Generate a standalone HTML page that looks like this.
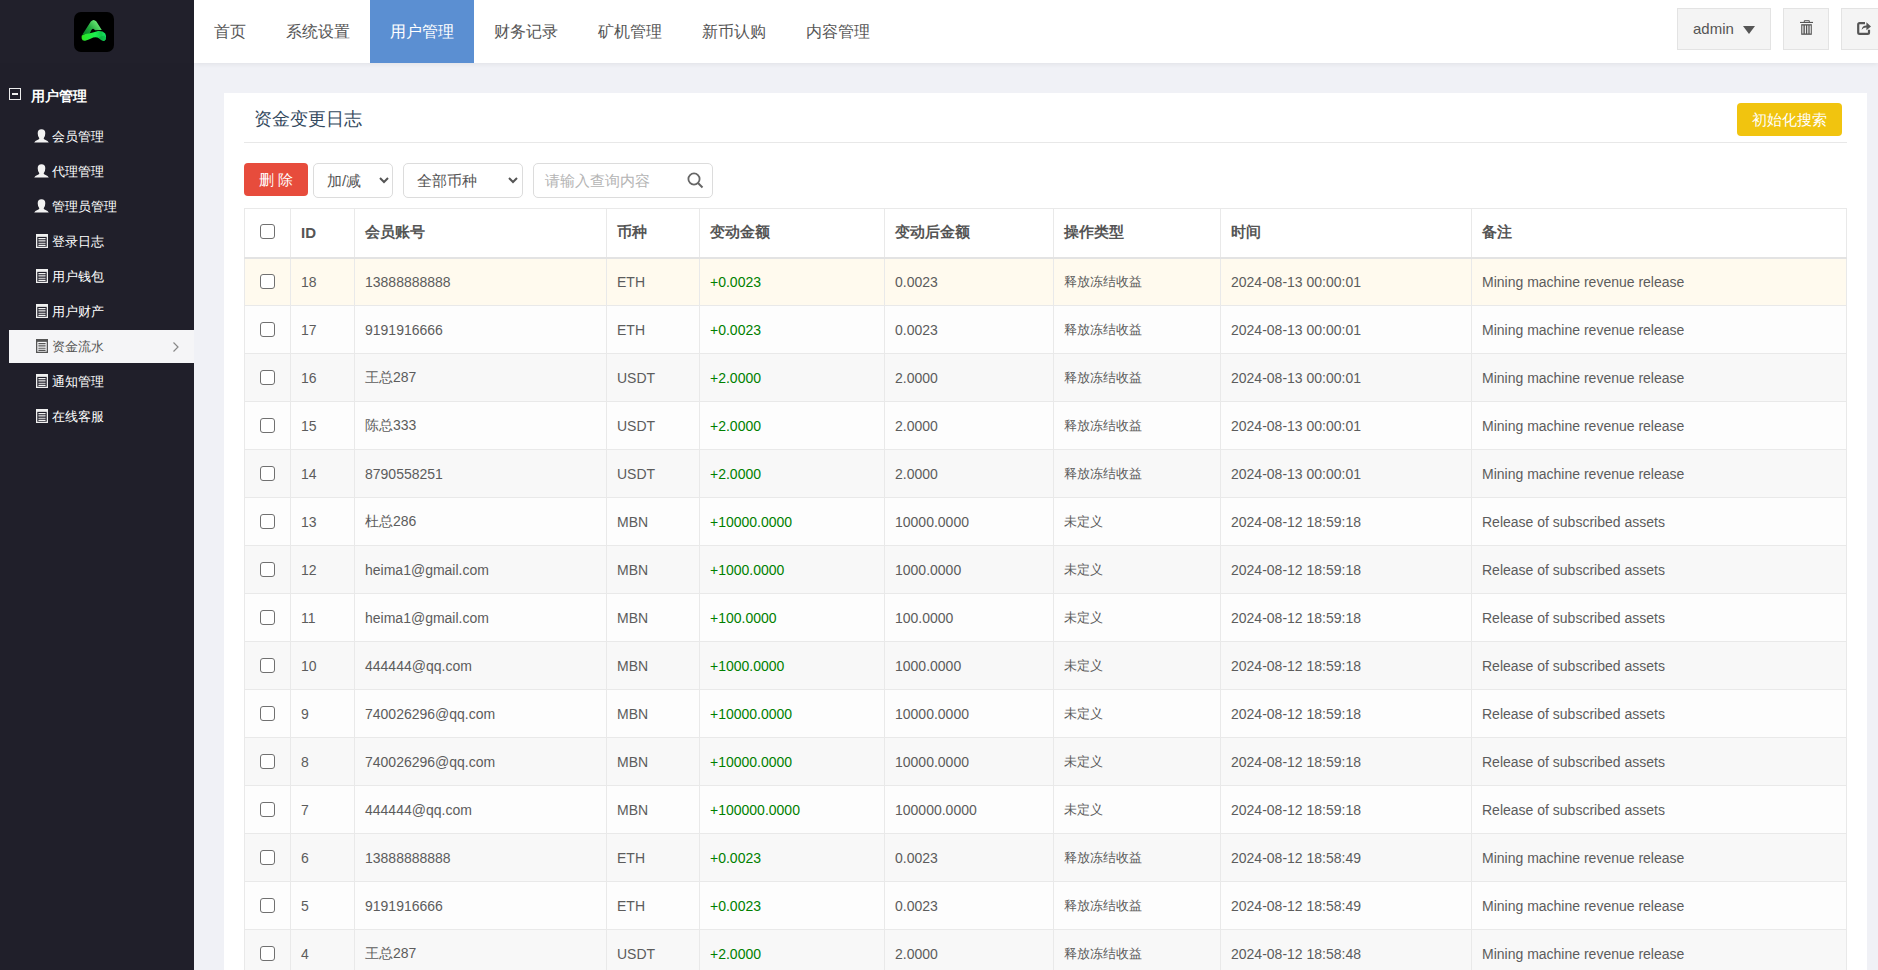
<!DOCTYPE html>
<html><head><meta charset="utf-8">
<style>
*{box-sizing:border-box;margin:0;padding:0}
html,body{width:1878px;height:970px;overflow:hidden}
body{background:#f0f1f6;font-family:"Liberation Sans",sans-serif;color:#555;position:relative}
#side{position:absolute;left:0;top:0;width:194px;height:970px;background:#201f2a}
#side .top{position:absolute;left:0;top:0;width:194px;height:63px;background:#21202b}
#logo{position:absolute;left:74px;top:12px;width:40px;height:40px;border-radius:7px;background:#000}
#side .grp{position:absolute;left:9px;top:88px;width:12px;height:12px;border:1.8px solid #ececec}
#side .grp:after{content:"";position:absolute;left:50%;top:50%;width:6px;height:2.2px;margin:-1.1px 0 0 -3px;background:#f0f0f0}
#side .gt{position:absolute;left:31px;top:86px;font-size:14px;font-weight:bold;color:#fff;line-height:20px}
.mi{position:absolute;left:9px;width:185px;height:33px;line-height:33px;font-size:13px;color:#fff}
.mi .t{position:absolute;left:43px;top:0}
.mi svg{position:absolute;left:26px;top:9px}
.mi.act{background:#f5f5f7;color:#555}
.mi .chev{position:absolute;left:164px;top:12px}
#nav{position:absolute;left:194px;top:0;width:1684px;height:63px;background:#fff;box-shadow:0 1px 5px rgba(0,0,0,.07)}
#nav .tab{position:absolute;top:0;height:63px;line-height:63px;font-size:16px;color:#555;padding:0 20px;white-space:nowrap}
#nav .tab.act{background:#5b8fd2;color:#fff}
.hb{position:absolute;top:8px;height:42px;background:#f4f4f4;border:1px solid #e3e3e3}
#card{position:absolute;left:224px;top:93px;width:1643px;height:900px;background:#fff}
#ttl{position:absolute;left:30px;top:14px;font-size:18px;line-height:24px;color:#34495e}
#hr{position:absolute;left:20px;top:49px;width:1603px;height:1px;background:#e8e8e8}
#rst{position:absolute;left:1513px;top:10px;width:105px;height:33px;border-radius:4px;background:#f1c40f;color:#fff;font-size:15px;line-height:33px;text-align:center}
#del{position:absolute;left:20px;top:70px;width:64px;height:33px;border-radius:4px;background:#e74c3c;color:#fff;font-size:15px;line-height:33px;text-align:center}
.sel{position:absolute;top:70px;height:35px;border:1px solid #dcdcdc;border-radius:5px;background:#fff;font-size:15px;line-height:34px;color:#555}
.sel .t{position:absolute;left:13px;top:0}
.sel svg{position:absolute;top:13px}
#tbl{position:absolute;left:20px;top:115px;width:1603px;border-collapse:collapse;table-layout:fixed}
#tbl th,#tbl td{border:1px solid #e9e9e9;text-align:left;padding:0 0 0 10px;white-space:nowrap;overflow:hidden}
#tbl th{height:49px;font-size:15px;font-weight:bold;color:#555;background:#fff;border-bottom:2px solid #e3e3e3}
#tbl td{height:48px;font-size:14px;color:#5c5c5c}
#tbl td.c0,#tbl th.c0{padding:0;text-align:center}
#tbl td.zh{font-size:13px}
#tbl td.g{color:#008000}
tr.hov td{background:#fffaee}
tr.odd td{background:#fdfdfd}
tr.even td{background:#f8f8f8}
.cb{display:inline-block;width:15px;height:15px;border:1px solid #707070;border-radius:3px;background:#fff;vertical-align:middle;position:relative;top:-1px}
</style></head><body>
<div id="side">
  <div class="top"></div>
  <div id="logo">
    <svg width="40" height="40" viewBox="0 0 40 40">
      <defs>
        <linearGradient id="lg1" x1="0.15" y1="0.85" x2="0.85" y2="0.35"><stop offset="0" stop-color="#0c8a2c"/><stop offset=".45" stop-color="#22a83e"/><stop offset="1" stop-color="#62e26e"/></linearGradient>
        <linearGradient id="lg2" x1="0" y1="0" x2="1" y2="0"><stop offset="0" stop-color="#2ee620"/><stop offset=".55" stop-color="#1cf050"/><stop offset=".8" stop-color="#10c848"/><stop offset="1" stop-color="#18f070"/></linearGradient>
      </defs>
      <path d="M8.3 22.8 L16.8 9.6 Q19.6 6.4 22.4 9.6 L27.8 17.9 L21 18.3 Q19.2 15.2 17.4 18 L15.6 21.8 Z" fill="url(#lg1)"/>
      <path d="M7.8 23.6 Q11 21.6 15.8 21.2 Q20 20.2 24 19 Q28.5 18.6 31.2 21.4 Q32.6 24 31.8 27.2 Q31 29 29.6 28.9 Q27.6 28.6 25.2 26.4 Q22.4 24.6 19.2 25.6 Q14.5 27.8 11.2 28.8 Q8.2 29.2 7.7 26.6 Q7.5 24.8 7.8 23.6 Z" fill="url(#lg2)"/>
      <path d="M24.5 25.8 Q27.5 24.2 30.6 23.6 Q32.2 25.5 31.6 27.6 Q30.6 29.2 29 28.7 Q26.8 27.6 24.5 25.8 Z" fill="#0aa43c" opacity=".55"/>
    </svg>
  </div>
  <div class="grp"></div>
  <div class="gt">用户管理</div>
  <div class="mi" style="top:120px"><svg style="left:25px" width="15" height="14" viewBox="0 -0.5 15 14"><path d="M7.5 -0.3Q3.7 -0.3 3.7 3.8Q3.7 7 5.3 8.7Q5.3 9.5 4.4 9.9Q0.6 11.2 0.2 13.1H14.8Q14.4 11.2 10.6 9.9Q9.7 9.5 9.7 8.7Q11.3 7 11.3 3.8Q11.3 -0.3 7.5 -0.3Z" fill="#f2f2f2"/></svg><span class="t">会员管理</span></div>
<div class="mi" style="top:155px"><svg style="left:25px" width="15" height="14" viewBox="0 -0.5 15 14"><path d="M7.5 -0.3Q3.7 -0.3 3.7 3.8Q3.7 7 5.3 8.7Q5.3 9.5 4.4 9.9Q0.6 11.2 0.2 13.1H14.8Q14.4 11.2 10.6 9.9Q9.7 9.5 9.7 8.7Q11.3 7 11.3 3.8Q11.3 -0.3 7.5 -0.3Z" fill="#f2f2f2"/></svg><span class="t">代理管理</span></div>
<div class="mi" style="top:190px"><svg style="left:25px" width="15" height="14" viewBox="0 -0.5 15 14"><path d="M7.5 -0.3Q3.7 -0.3 3.7 3.8Q3.7 7 5.3 8.7Q5.3 9.5 4.4 9.9Q0.6 11.2 0.2 13.1H14.8Q14.4 11.2 10.6 9.9Q9.7 9.5 9.7 8.7Q11.3 7 11.3 3.8Q11.3 -0.3 7.5 -0.3Z" fill="#f2f2f2"/></svg><span class="t">管理员管理</span></div>
<div class="mi" style="top:225px"><svg style="left:27px" width="12" height="14" viewBox="0 0 12 14"><rect x="0.65" y="0.65" width="10.7" height="12.7" fill="none" stroke="#f0f0f0" stroke-width="1.3"/><rect x="0.65" y="0.65" width="10.7" height="2.2" fill="#f0f0f0"/><path d="M2.4 4.6H9.6M2.4 6.9H9.6M2.4 9.2H9.6M2.4 11.3H9.6" stroke="#f0f0f0" stroke-width="1.15"/></svg><span class="t">登录日志</span></div>
<div class="mi" style="top:260px"><svg style="left:27px" width="12" height="14" viewBox="0 0 12 14"><rect x="0.65" y="0.65" width="10.7" height="12.7" fill="none" stroke="#f0f0f0" stroke-width="1.3"/><rect x="0.65" y="0.65" width="10.7" height="2.2" fill="#f0f0f0"/><path d="M2.4 4.6H9.6M2.4 6.9H9.6M2.4 9.2H9.6M2.4 11.3H9.6" stroke="#f0f0f0" stroke-width="1.15"/></svg><span class="t">用户钱包</span></div>
<div class="mi" style="top:295px"><svg style="left:27px" width="12" height="14" viewBox="0 0 12 14"><rect x="0.65" y="0.65" width="10.7" height="12.7" fill="none" stroke="#f0f0f0" stroke-width="1.3"/><rect x="0.65" y="0.65" width="10.7" height="2.2" fill="#f0f0f0"/><path d="M2.4 4.6H9.6M2.4 6.9H9.6M2.4 9.2H9.6M2.4 11.3H9.6" stroke="#f0f0f0" stroke-width="1.15"/></svg><span class="t">用户财产</span></div>
<div class="mi act" style="top:329.5px"><svg style="left:27px" width="12" height="14" viewBox="0 0 12 14"><rect x="0.65" y="0.65" width="10.7" height="12.7" fill="none" stroke="#555" stroke-width="1.3"/><rect x="0.65" y="0.65" width="10.7" height="2.2" fill="#555"/><path d="M2.4 4.6H9.6M2.4 6.9H9.6M2.4 9.2H9.6M2.4 11.3H9.6" stroke="#555" stroke-width="1.15"/></svg><span class="t">资金流水</span><svg class="chev" width="6" height="10" viewBox="0 0 6 10"><path d="M0.5 0.5L5 5L0.5 9.5" fill="none" stroke="#888" stroke-width="1.2"/></svg></div>
<div class="mi" style="top:365px"><svg style="left:27px" width="12" height="14" viewBox="0 0 12 14"><rect x="0.65" y="0.65" width="10.7" height="12.7" fill="none" stroke="#f0f0f0" stroke-width="1.3"/><rect x="0.65" y="0.65" width="10.7" height="2.2" fill="#f0f0f0"/><path d="M2.4 4.6H9.6M2.4 6.9H9.6M2.4 9.2H9.6M2.4 11.3H9.6" stroke="#f0f0f0" stroke-width="1.15"/></svg><span class="t">通知管理</span></div>
<div class="mi" style="top:400px"><svg style="left:27px" width="12" height="14" viewBox="0 0 12 14"><rect x="0.65" y="0.65" width="10.7" height="12.7" fill="none" stroke="#f0f0f0" stroke-width="1.3"/><rect x="0.65" y="0.65" width="10.7" height="2.2" fill="#f0f0f0"/><path d="M2.4 4.6H9.6M2.4 6.9H9.6M2.4 9.2H9.6M2.4 11.3H9.6" stroke="#f0f0f0" stroke-width="1.15"/></svg><span class="t">在线客服</span></div>
</div>
<div id="nav">
  <div class="tab" style="left:0">首页</div>
  <div class="tab" style="left:72px">系统设置</div>
  <div class="tab act" style="left:176px">用户管理</div>
  <div class="tab" style="left:280px">财务记录</div>
  <div class="tab" style="left:384px">矿机管理</div>
  <div class="tab" style="left:488px">新币认购</div>
  <div class="tab" style="left:592px">内容管理</div>
  <div class="hb" style="left:1483px;width:94px">
    <span style="position:absolute;left:15px;top:10px;font-size:15px;line-height:20px;color:#555">admin</span>
    <svg style="position:absolute;left:65px;top:17px" width="12" height="8" viewBox="0 0 12 8"><path d="M0 0H12L6 8Z" fill="#555"/></svg>
  </div>
  <div class="hb" style="left:1589px;width:46px">
    <svg style="position:absolute;left:16px;top:11px" width="14" height="16" viewBox="0 0 14 16">
      <path d="M4.3 2.3V0.7H9.3V2.3" fill="none" stroke="#555" stroke-width="1"/>
      <rect x="0" y="1.9" width="13" height="1.1" fill="#555"/>
      <rect x="1.2" y="4.2" width="10.6" height="10.6" fill="#555"/>
      <path d="M2.9 5.6V13.6M5.4 5.6V13.6M7.8 5.6V13.6M10.2 5.6V13.6" stroke="#f4f4f4" stroke-width="1.1"/>
    </svg>
  </div>
  <div class="hb" style="left:1647px;width:46px">
    <svg style="position:absolute;left:15px;top:13px" width="15" height="14" viewBox="0 0 15 14">
      <path d="M8 1.1H2.6Q1.2 1.1 1.2 2.5V10.4Q1.2 11.8 2.6 11.8H10.6Q12 11.8 12 10.4V7.8" fill="none" stroke="#555" stroke-width="2.2"/>
      <path d="M4.6 7.8Q5.2 3.4 9.4 3.4V0.3L14 4.4L9.4 8.3V5.5Q6.6 5.4 4.6 7.8Z" fill="#555"/>
    </svg>
  </div>
</div>
<div id="card">
  <div id="ttl">资金变更日志</div>
  <div id="rst">初始化搜索</div>
  <div id="hr"></div>
  <div id="del">删 除</div>
  <div class="sel" style="left:89px;width:80px"><span class="t">加/减</span>
    <svg style="left:65px" width="10" height="7" viewBox="0 0 10 7"><path d="M1 1L5 5L9 1" fill="none" stroke="#555" stroke-width="2"/></svg></div>
  <div class="sel" style="left:179px;width:120px"><span class="t">全部币种</span>
    <svg style="left:104px" width="10" height="7" viewBox="0 0 10 7"><path d="M1 1L5 5L9 1" fill="none" stroke="#555" stroke-width="2"/></svg></div>
  <div class="sel" style="left:309px;width:180px"><span class="t" style="left:11px;color:#b4b4b4">请输入查询内容</span>
    <svg style="left:153px;top:8px" width="17" height="17" viewBox="0 0 17 17"><circle cx="7" cy="7" r="5.6" fill="none" stroke="#666" stroke-width="1.8"/><path d="M11 11L15.5 15.5" stroke="#666" stroke-width="2"/></svg></div>
  <table id="tbl">
    <colgroup><col style="width:46px"><col style="width:64px"><col style="width:252px"><col style="width:93px"><col style="width:185px"><col style="width:169px"><col style="width:167px"><col style="width:251px"><col style="width:375px"></colgroup>
    <thead><tr><th class="c0"><span class="cb" style="top:-3px"></span></th><th>ID</th><th>会员账号</th><th>币种</th><th>变动金额</th><th>变动后金额</th><th>操作类型</th><th>时间</th><th>备注</th></tr></thead>
    <tbody>
<tr class="hov"><td class="c0"><span class="cb"></span></td><td>18</td><td>13888888888</td><td>ETH</td><td class="g">+0.0023</td><td>0.0023</td><td class="zh">释放冻结收益</td><td>2024-08-13 00:00:01</td><td>Mining machine revenue release</td></tr>
<tr class="odd"><td class="c0"><span class="cb"></span></td><td>17</td><td>9191916666</td><td>ETH</td><td class="g">+0.0023</td><td>0.0023</td><td class="zh">释放冻结收益</td><td>2024-08-13 00:00:01</td><td>Mining machine revenue release</td></tr>
<tr class="even"><td class="c0"><span class="cb"></span></td><td>16</td><td>王总287</td><td>USDT</td><td class="g">+2.0000</td><td>2.0000</td><td class="zh">释放冻结收益</td><td>2024-08-13 00:00:01</td><td>Mining machine revenue release</td></tr>
<tr class="odd"><td class="c0"><span class="cb"></span></td><td>15</td><td>陈总333</td><td>USDT</td><td class="g">+2.0000</td><td>2.0000</td><td class="zh">释放冻结收益</td><td>2024-08-13 00:00:01</td><td>Mining machine revenue release</td></tr>
<tr class="even"><td class="c0"><span class="cb"></span></td><td>14</td><td>8790558251</td><td>USDT</td><td class="g">+2.0000</td><td>2.0000</td><td class="zh">释放冻结收益</td><td>2024-08-13 00:00:01</td><td>Mining machine revenue release</td></tr>
<tr class="odd"><td class="c0"><span class="cb"></span></td><td>13</td><td>杜总286</td><td>MBN</td><td class="g">+10000.0000</td><td>10000.0000</td><td class="zh">未定义</td><td>2024-08-12 18:59:18</td><td>Release of subscribed assets</td></tr>
<tr class="even"><td class="c0"><span class="cb"></span></td><td>12</td><td>heima1@gmail.com</td><td>MBN</td><td class="g">+1000.0000</td><td>1000.0000</td><td class="zh">未定义</td><td>2024-08-12 18:59:18</td><td>Release of subscribed assets</td></tr>
<tr class="odd"><td class="c0"><span class="cb"></span></td><td>11</td><td>heima1@gmail.com</td><td>MBN</td><td class="g">+100.0000</td><td>100.0000</td><td class="zh">未定义</td><td>2024-08-12 18:59:18</td><td>Release of subscribed assets</td></tr>
<tr class="even"><td class="c0"><span class="cb"></span></td><td>10</td><td>444444@qq.com</td><td>MBN</td><td class="g">+1000.0000</td><td>1000.0000</td><td class="zh">未定义</td><td>2024-08-12 18:59:18</td><td>Release of subscribed assets</td></tr>
<tr class="odd"><td class="c0"><span class="cb"></span></td><td>9</td><td>740026296@qq.com</td><td>MBN</td><td class="g">+10000.0000</td><td>10000.0000</td><td class="zh">未定义</td><td>2024-08-12 18:59:18</td><td>Release of subscribed assets</td></tr>
<tr class="even"><td class="c0"><span class="cb"></span></td><td>8</td><td>740026296@qq.com</td><td>MBN</td><td class="g">+10000.0000</td><td>10000.0000</td><td class="zh">未定义</td><td>2024-08-12 18:59:18</td><td>Release of subscribed assets</td></tr>
<tr class="odd"><td class="c0"><span class="cb"></span></td><td>7</td><td>444444@qq.com</td><td>MBN</td><td class="g">+100000.0000</td><td>100000.0000</td><td class="zh">未定义</td><td>2024-08-12 18:59:18</td><td>Release of subscribed assets</td></tr>
<tr class="even"><td class="c0"><span class="cb"></span></td><td>6</td><td>13888888888</td><td>ETH</td><td class="g">+0.0023</td><td>0.0023</td><td class="zh">释放冻结收益</td><td>2024-08-12 18:58:49</td><td>Mining machine revenue release</td></tr>
<tr class="odd"><td class="c0"><span class="cb"></span></td><td>5</td><td>9191916666</td><td>ETH</td><td class="g">+0.0023</td><td>0.0023</td><td class="zh">释放冻结收益</td><td>2024-08-12 18:58:49</td><td>Mining machine revenue release</td></tr>
<tr class="even"><td class="c0"><span class="cb"></span></td><td>4</td><td>王总287</td><td>USDT</td><td class="g">+2.0000</td><td>2.0000</td><td class="zh">释放冻结收益</td><td>2024-08-12 18:58:48</td><td>Mining machine revenue release</td></tr>
<tr class="odd"><td class="c0"><span class="cb"></span></td><td>3</td><td>陈总333</td><td>USDT</td><td class="g">+2.0000</td><td>2.0000</td><td class="zh">释放冻结收益</td><td>2024-08-12 18:58:48</td><td>Mining machine revenue release</td></tr>
    </tbody>
  </table>
</div>
</body></html>
